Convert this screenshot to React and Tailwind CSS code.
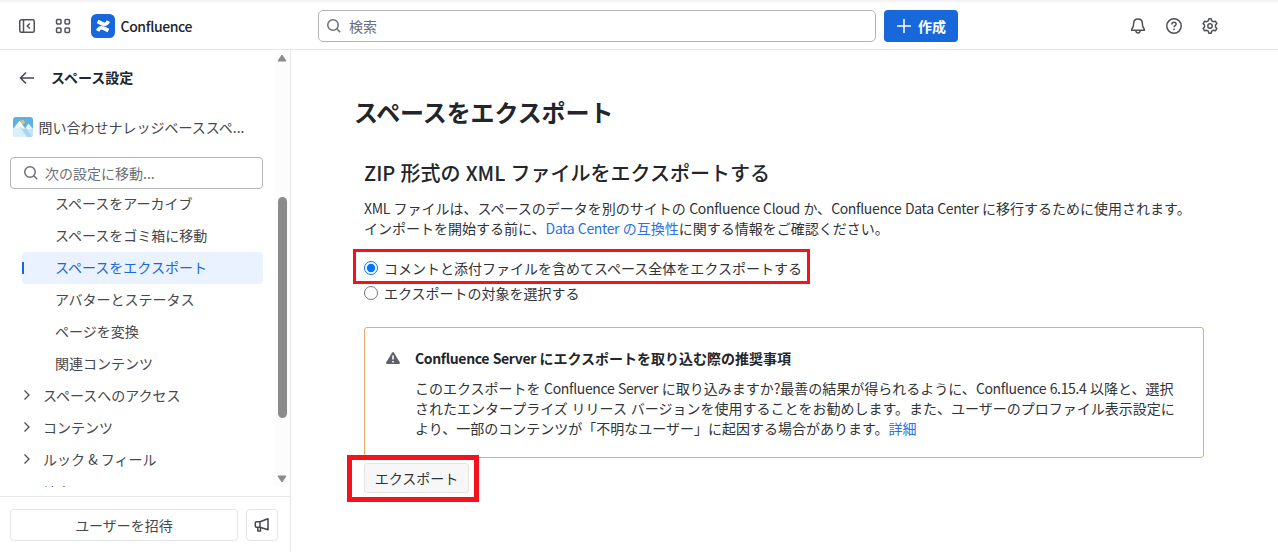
import React, { useState } from 'react';

const settingsItems = [
    { id: 'archive', label: 'スペースをアーカイブ' },
    { id: 'trash', label: 'スペースをゴミ箱に移動' },
    { id: 'export', label: 'スペースをエクスポート' },
    { id: 'avatars', label: 'アバターとステータス' },
    { id: 'convert', label: 'ページを変換' },
    { id: 'related', label: '関連コンテンツ' }
];

const settingsGroups = ['スペースへのアクセス', 'コンテンツ', 'ルック & フィール'];

function En({ children }) {
    return <span className="tracking-[-0.35px]">{children}</span>;
}

function Icon({ className = 'w-4 h-4', children }) {
    return (
        <svg
            viewBox="0 0 16 16"
            fill="none"
            stroke="currentColor"
            strokeWidth="1.5"
            className={`shrink-0 ${className}`}
        >
            {children}
        </svg>
    );
}

function SearchIcon() {
    return (
        <Icon>
            <circle cx="7" cy="7" r="5.25" />
            <path d="M10.8 10.8L14.2 14.2" />
        </Icon>
    );
}

function ConfluenceLogo() {
    return (
        <svg viewBox="0 0 24 24" className="w-6 h-6 shrink-0">
            <rect width="24" height="24" rx="5.5" fill="#1868db" />
            <g fill="none" stroke="#fff" strokeWidth="3.7" strokeLinejoin="round">
                <path d="M6.6 16.9C8.4 13.6 9.6 12.9 12.6 14.3L17.4 16.5" />
                <path d="M17.4 7.1C15.6 10.4 14.4 11.1 11.4 9.7L6.6 7.5" />
            </g>
        </svg>
    );
}

function SpaceAvatar() {
    return (
        <svg viewBox="0 0 20 20" className="w-5 h-5 shrink-0">
            <defs>
                <clipPath id="avatar">
                    <rect width="20" height="20" rx="3" />
                </clipPath>
            </defs>
            <g clipPath="url(#avatar)">
                <rect width="20" height="20" fill="#5cb3e2" />
                <circle cx="9.5" cy="5.2" r="2.2" fill="#f2bd76" />
                <path d="M0 12L6.5 3.8L14 14V20H0z" fill="#f4fafd" />
                <path d="M11 13L15.5 6.5L20 12V20H11z" fill="#e6f4fb" />
                <path d="M0 12L2.5 10L4.5 11.5L6.5 9.5L14 20H0z" fill="#d9eff9" />
                <path d="M6.5 9.5L10 12L13 11L20 20H14z" fill="#a9d6ec" />
                <path d="M13 11L15.5 12.5L20 11.5V20z" fill="#c5e4f3" />
            </g>
        </svg>
    );
}

function Header() {
    return (
        <header className="flex h-[50px] shrink-0 items-center border-t-2 border-b border-t-[#f4f4f4] border-b-[#e6e7e9] pl-[18.5px] text-[#505258]">
            <Icon>
                <rect x="0.75" y="1.75" width="14.5" height="12.5" rx="1.5" />
                <path d="M4.5 2V14M10.8 5.5L8.3 8L10.8 10.5" />
            </Icon>
            <Icon className="ml-5 w-4 h-4">
                <rect x="1.5" y="1.5" width="4.5" height="4.5" rx="1" />
                <rect x="10" y="1.5" width="4.5" height="4.5" rx="1" />
                <rect x="1.5" y="10" width="4.5" height="4.5" rx="1" />
                <rect x="10" y="10" width="4.5" height="4.5" rx="1" />
            </Icon>
            <div className="ml-5 flex w-[227.5px] items-center gap-1.5 text-[#22252a]">
                <ConfluenceLogo />
                <span className="text-sm font-medium tracking-[-0.4px]">Confluence</span>
            </div>
            <div className="flex h-8 w-[558px] items-center gap-[7px] rounded-[5px] border border-[#b1b3b8] pl-[7px] text-[#6b6e76]">
                <SearchIcon />
                <span className="text-sm">検索</span>
            </div>
            <button className="ml-2 flex h-8 w-[74px] items-center justify-center gap-1.5 rounded bg-[#1868db] text-sm font-bold text-white">
                <Icon>
                    <path d="M8 1V15M1 8H15" />
                </Icon>
                作成
            </button>
            <div className="ml-[172px] flex gap-5">
                <Icon>
                    <path d="M8 0.9c-2.7 0-4.3 2-4.3 4.3 0 3-.6 4.6-2 6.1v1h12.6v-1c-1.4-1.5-2-3.1-2-6.1C12.3 2.9 10.7.9 8 .9z" />
                    <path d="M5.8 12.5c.1 1.5 1 2.4 2.2 2.4s2.1-.9 2.2-2.4" />
                </Icon>
                <Icon>
                    <circle cx="8" cy="8" r="7.25" />
                    <path d="M5.9 6.4c0-1.3.9-2.1 2.1-2.1s2.1.8 2.1 1.9c0 1.5-2.1 1.5-2.1 3.1" />
                    <circle cx="8" cy="11.3" r="0.9" fill="currentColor" stroke="none" />
                </Icon>
                <Icon>
                    <path
                        strokeLinejoin="round"
                        d="M6.3 2.8L6.9.8H9.1L9.7 2.8L11.3 3.7L13.4 3.2L14.9 5.6L13.5 7.1V8.9L14.9 10.4L13.4 12.8L11.3 12.3L9.7 13.2L9.1 15.2H6.9L6.3 13.2L4.7 12.3L2.6 12.8L1.1 10.4L2.5 8.9V7.1L1.1 5.6L2.6 3.2L4.7 3.7z"
                    />
                    <circle cx="8" cy="8" r="2.2" />
                </Icon>
            </div>
        </header>
    );
}

function Scrollbar() {
    return (
        <div className="flex w-[15px] flex-col items-center bg-[#fcfcfc] pt-1 pr-px">
            <svg viewBox="0 0 10 8" className="h-2 w-2.5">
                <path d="M5 1L9 7H1z" fill="#8b8b8b" stroke="#8b8b8b" strokeLinejoin="round" />
            </svg>
            <div className="mt-[135px] h-[221px] w-[9px] rounded-full bg-[#8b8b8b]" />
            <svg viewBox="0 0 10 8" className="mt-[57px] h-2 w-2.5">
                <path d="M5 7L1 1H9z" fill="#8b8b8b" stroke="#8b8b8b" strokeLinejoin="round" />
            </svg>
        </div>
    );
}

function Sidebar() {
    const [selected, setSelected] = useState('export');

    return (
        <aside className="flex w-[291px] shrink-0 flex-col border-r border-[#e6e7e9] text-sm text-[#44474d]">
            <div className="flex h-[437px]">
                <div className="flex w-[275px] flex-col overflow-hidden pl-2.5">
                    <div className="flex h-14 shrink-0 items-center gap-4 pl-[9px]">
                        <Icon>
                            <path d="M7 2.5L1.5 8L7 13.5M1.5 8H15" />
                        </Icon>
                        <h2 className="-mt-0.5 font-bold text-[#22252a]">スペース設定</h2>
                    </div>
                    <div className="mt-[11px] flex h-5 shrink-0 items-center gap-1.5 pl-[2.5px]">
                        <SpaceAvatar />
                        <span>問い合わせナレッジベーススペ...</span>
                    </div>
                    <div className="mt-5 flex h-8 w-[253px] shrink-0 items-center gap-1.5 rounded border border-[#b1b3b8] pl-3 text-[#6b6e76]">
                        <SearchIcon />
                        <span>次の設定に移動...</span>
                    </div>
                    <nav className="-mt-px flex flex-col pl-3">
                        {settingsItems.map((item) => (
                            <button
                                key={item.id}
                                onClick={() => setSelected(item.id)}
                                className={
                                    item.id === selected
                                        ? 'flex h-8 w-[241px] items-center rounded bg-[#e9f2fe] text-[#1868db]'
                                        : 'flex h-8 w-[241px] items-center'
                                }
                            >
                                <span
                                    className={
                                        item.id === selected ? 'h-3 w-0.5 bg-[#1868db]' : 'h-3 w-0.5'
                                    }
                                />
                                <span className="ml-[31px] pb-0.5">{item.label}</span>
                            </button>
                        ))}
                        {settingsGroups.map((label) => (
                            <button key={label} className="flex h-8 items-center gap-3 pb-0.5 pl-px">
                                <svg
                                    viewBox="0 0 8 12"
                                    fill="none"
                                    stroke="currentColor"
                                    strokeWidth="1.2"
                                    className="h-3 w-2"
                                >
                                    <path d="M1.5 1.5L6 6L1.5 10.5" />
                                </svg>
                                {label}
                            </button>
                        ))}
                        <div className="flex h-8 items-center pl-[21px]">統合</div>
                    </nav>
                </div>
                <Scrollbar />
            </div>
            <div className="mt-[9px] flex flex-1 gap-2 border-t border-[#e6e7e9] pt-3 pl-2.5">
                <button className="h-8 w-[228px] rounded border border-[#e3e4e6]">ユーザーを招待</button>
                <button className="flex h-8 w-8 items-center justify-center rounded border border-[#e3e4e6]">
                    <Icon>
                        <path
                            strokeLinejoin="round"
                            d="M2.5 4.8H6L14 1.8V12.8L6 10.2H2.5Q1.3 10.2 1.3 9V6Q1.3 4.8 2.5 4.8zM6 4.8V10.2M3.8 10.4V14H6.5V10.6"
                        />
                    </Icon>
                </button>
            </div>
        </aside>
    );
}

function WarningPanel() {
    return (
        <section className="mt-6 flex h-[131px] w-[840px] gap-3.5 rounded-[3px] border border-[#f0a76b] pt-5 pl-5">
            <svg viewBox="0 0 16 16" className="mt-0.5 h-4 w-4 shrink-0">
                <path
                    d="M8 3L14 13H2z"
                    fill="#5e6168"
                    stroke="#5e6168"
                    strokeWidth="2"
                    strokeLinejoin="round"
                />
                <path d="M8 5.5V9.5M8 11V12.5" stroke="#fff" strokeWidth="1.6" />
            </svg>
            <div>
                <h3 className="font-bold text-[#22252a]">
                    <En>Confluence Server </En>にエクスポートを取り込む際の推奨事項
                </h3>
                <p className="mt-2.5 whitespace-nowrap">
                    このエクスポートを<En> Confluence Server </En>に取り込みますか?最善の結果が得られるように、<En>Confluence 6.15.4 </En>以降と、選択
                    <br />
                    されたエンタープライズ リリース バージョンを使用することをお勧めします。また、ユーザーのプロファイル表示設定に
                    <br />
                    より、一部のコンテンツが「不明なユーザー」に起因する場合があります。
                    <a className="text-[#2b70e4]">詳細</a>
                </p>
            </div>
        </section>
    );
}

function ExportPage() {
    const [scope, setScope] = useState('all');

    return (
        <main className="flex-1 pt-[46px] pl-[63px] text-sm leading-5 text-[#303338]">
            <h1 className="text-2xl leading-8 font-bold tracking-[-0.1px] text-[#22252a]">スペースをエクスポート</h1>
            <div className="pl-2.5">
                <h2 className="mt-[31px] text-xl leading-7 font-medium text-[#22252a]">
                    ZIP 形式の XML ファイルをエクスポートする
                </h2>
                <p className="mt-[11px] whitespace-nowrap">
                    <En>XML </En>ファイルは、スペースのデータを別のサイトの<En> Confluence Cloud </En>か、<En>Confluence Data Center </En>に移行するために使用されます。
                    <br />
                    インポートを開始する前に、<a className="text-[#2b70e4]"><En>Data Center </En>の互換性</a>
                    に関する情報をご確認ください。
                </p>
                <div className="relative mt-5 w-fit">
                    <label className="flex items-center gap-1.5">
                        <input
                            type="radio"
                            name="scope"
                            className="h-3.5 w-3.5"
                            checked={scope === 'all'}
                            onChange={() => setScope('all')}
                        />
                        コメントと添付ファイルを含めてスペース全体をエクスポートする
                    </label>
                    <div className="pointer-events-none absolute -top-[9px] -left-[11px] h-[35px] w-[457px] border-[3px] border-[#f5121d]" />
                </div>
                <label className="mt-[5px] flex items-center gap-1.5">
                    <input
                        type="radio"
                        name="scope"
                        className="h-3.5 w-3.5"
                        checked={scope === 'custom'}
                        onChange={() => setScope('custom')}
                    />
                    エクスポートの対象を選択する
                </label>
                <WarningPanel />
                <div className="relative mt-[5px] w-fit">
                    <button className="h-[30px] w-[105px] rounded-[3px] border border-[#e3e4e6] bg-[#f7f7f7]">
                        エクスポート
                    </button>
                    <div className="pointer-events-none absolute -top-2 -left-[17px] h-[47px] w-[132px] border-[5px] border-[#f5121d]" />
                </div>
            </div>
        </main>
    );
}

function App() {
    return (
        <div
            lang="ja"
            className="flex h-[552px] w-[1278px] flex-col overflow-hidden bg-white font-['Noto_Sans_CJK_JP',sans-serif] [word-spacing:0.7px]"
        >
            <Header />
            <div className="flex flex-1">
                <Sidebar />
                <ExportPage />
            </div>
        </div>
    );
}

export default App;
